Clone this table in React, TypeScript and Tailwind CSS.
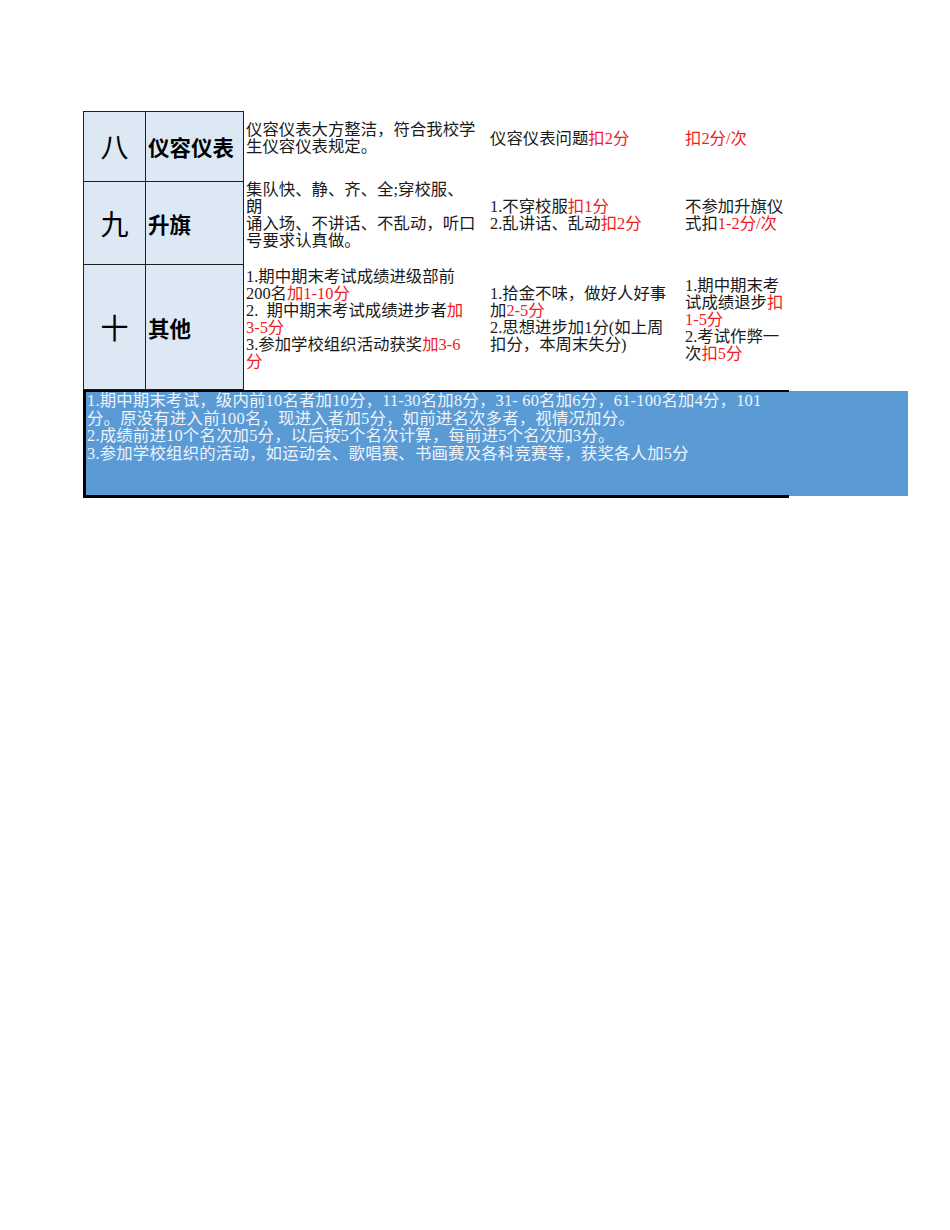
import React from 'react';

const song = { fontFamily: '"Liberation Serif", "Noto Sans CJK SC", serif' };
const hei = { fontFamily: '"Noto Sans CJK SC", "Noto Sans", sans-serif' };

const R: React.FC<{ children: React.ReactNode }> = ({ children }) => (
  <span className="text-[#ee1c25]">{children}</span>
);

type Row = {
  num: string;
  title: string;
  h: string;
  rule: React.ReactNode;
  penalty: React.ReactNode;
  score: React.ReactNode;
};

const rows: Row[] = [
  {
    num: '八',
    title: '仪容仪表',
    h: 'h-[71px] border-t',
    rule: (
      <>
        仪容仪表大方整洁，符合我校学
        <br />
        生仪容仪表规定。
      </>
    ),
    penalty: (
      <>
        仪容仪表问题<R>扣2分</R>
      </>
    ),
    score: <R>扣2分/次</R>,
  },
  {
    num: '九',
    title: '升旗',
    h: 'h-[83px]',
    rule: (
      <>
        集队快、静、齐、全;穿校服、
        <br />
        朗
        <br />
        诵入场、不讲话、不乱动，听口
        <br />
        号要求认真做。
      </>
    ),
    penalty: (
      <>
        1.不穿校服<R>扣1分</R>
        <br />
        2.乱讲话、乱动<R>扣2分</R>
      </>
    ),
    score: (
      <>
        不参加升旗仪
        <br />
        式扣<R>1-2分/次</R>
      </>
    ),
  },
  {
    num: '十',
    title: '其他',
    h: 'h-[125px]',
    rule: (
      <>
        1.期中期末考试成绩进级部前
        <br />
        200名<R>加1-10分</R>
        <br />
        2.&nbsp;&nbsp;期中期末考试成绩进步者<R>加</R>
        <br />
        <R>3-5分</R>
        <br />
        3.参加学校组织活动获奖<R>加3-6</R>
        <br />
        <R>分</R>
      </>
    ),
    penalty: (
      <>
        1.拾金不味，做好人好事
        <br />
        加<R>2-5分</R>
        <br />
        2.思想进步加1分(如上周
        <br />
        扣分，本周末失分)
      </>
    ),
    score: (
      <>
        1.期中期末考
        <br />
        试成绩退步<R>扣</R>
        <br />
        <R>1-5分</R>
        <br />
        2.考试作弊一
        <br />
        次<R>扣5分</R>
      </>
    ),
  },
];

const notes = [
  '1.期中期末考试，级内前10名者加10分，11-30名加8分，31- 60名加6分，61-100名加4分，101',
  '分。原没有进入前100名，现进入者加5分，如前进名次多者，视情况加分。',
  '2.成绩前进10个名次加5分，以后按5个名次计算，每前进5个名次加3分。',
  '3.参加学校组织的活动，如运动会、歌唱赛、书画赛及各科竞赛等，获奖各人加5分',
];

export default function App() {
  return (
    <div className="w-[950px] h-[1230px] bg-white pt-[111px] pl-[83px]">
      <div className="w-[706px] text-[16.4px] leading-[17px] text-[#1a1a1a]" style={song}>
        {rows.map((r) => (
          <div key={r.num} className="flex">
            <div
              className={`${r.h} w-[63px] border-l border-r border-b border-[#1f1f1f] bg-[#dde8f5] flex items-center justify-center text-[28px] text-black`}
              style={hei}
            >
              {r.num}
            </div>
            <div
              className={`${r.h} w-[98px] border-r border-b border-[#1f1f1f] bg-[#dde8f5] flex items-center pl-[2px] text-[21.5px] font-bold text-black`}
              style={hei}
            >
              {r.title}
            </div>
            <div className={`${r.h} w-[244px] border-t-0 flex items-center pl-[2px] pb-[17px] whitespace-nowrap`}>
              <div>{r.rule}</div>
            </div>
            <div className={`${r.h} w-[195px] border-t-0 flex items-center pl-[2px] pb-[17px] whitespace-nowrap`}>
              <div>{r.penalty}</div>
            </div>
            <div className={`${r.h} w-[106px] border-t-0 flex items-center pl-[2px] pb-[17px] whitespace-nowrap`}>
              <div>{r.score}</div>
            </div>
          </div>
        ))}
      </div>

      <div className="flex items-start w-[825px]">
        <div
          className="w-[706px] h-[108px] border-l-[3px] border-t-2 border-b-[3px] border-black bg-[#5b9bd5] overflow-hidden pl-[1px] text-[16.4px] leading-[17.5px] text-[#eef3fa] tracking-[0.2px]"
          style={song}
        >
          {notes.map((n, i) => (
            <div key={i} className="whitespace-nowrap">
              {n}
            </div>
          ))}
        </div>
        <div className="w-[119px] h-[105px] mt-[1px] bg-[#5b9bd5]" />
      </div>
    </div>
  );
}
